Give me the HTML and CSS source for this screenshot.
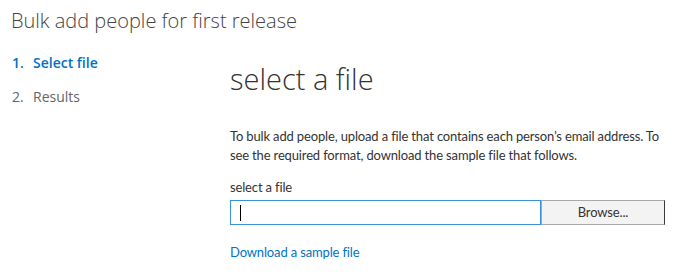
FILE: index.html
```html
<!DOCTYPE html>
<html>
<head>
    <meta charset="UTF-8">
    <title>Bulk add people for first release</title>
    <link rel="stylesheet" href="styles.css">
</head>
<body>
<h1 class="page-title">Bulk add people for first release</h1>
<div class="wizard">
    <ol class="steps">
        <li class="step current"><span class="num">1.</span>Select file</li>
        <li class="step"><span class="num">2.</span>Results</li>
    </ol>
    <div class="pane">
        <h2 class="pane-title">select a file</h2>
        <p class="intro">To bulk add people, upload a file that contains each person’s email address. To see the required format, download the sample file that follows.</p>
        <label class="field-label">select a file</label>
        <div class="file-row">
            <div class="file-box"><span class="caret"></span></div>
            <button class="browse">Browse...</button>
        </div>
        <a class="sample-link" href="#">Download a sample file</a>
    </div>
</div>
</body>
</html>
```

FILE: styles.css
```css
body {
    margin: 0;
    font-family: "Open Sans", "Noto Sans", sans-serif;
    color: #333;
    background: #fff;
}
.page-title {
    margin: 0;
    padding: 7px 0 0 11px;
    font-size: 20px;
    line-height: 28px;
    font-weight: 300;
    color: #444;
}
.wizard {
    display: flex;
}
.steps {
    list-style: none;
    margin: 0;
    padding: 18px 0 0 12px;
    width: 218px;
}
.step {
    font-size: 14px;
    line-height: 20px;
    margin-bottom: 14px;
    color: #666;
}
.step .num {
    display: inline-block;
    width: 21px;
}
.step.current {
    color: #0072c6;
    font-weight: 600;
}
.pane {
    width: 445px;
    padding-top: 26px;
}
.pane-title {
    margin: 0;
    font-size: 29px;
    line-height: 36px;
    font-weight: 300;
    color: #333;
}
.intro,
.field-label,
.browse,
.sample-link {
    font-family: Lato, "Open Sans", sans-serif;
    font-size: 13px;
    line-height: 19px;
    letter-spacing: -0.15px;
}
.intro {
    margin: 30px 0 13px;
}
.field-label {
    display: block;
}
.file-row {
    display: flex;
    margin-top: 3px;
    width: 435px;
    height: 25px;
}
.file-box {
    flex: 1;
    border: 1px solid #3a8fd8;
    display: flex;
    align-items: center;
    padding-left: 9px;
}
.caret {
    width: 1px;
    height: 16px;
    background: #000;
}
.browse {
    width: 124px;
    border: 1px solid #a9a9a9;
    border-right-color: #3a3a3a;
    background: #f3f3f3;
    color: #333;
    padding: 0;
}
.sample-link {
    display: inline-block;
    margin-top: 18px;
    color: #0072c6;
    text-decoration: none;
}
```
